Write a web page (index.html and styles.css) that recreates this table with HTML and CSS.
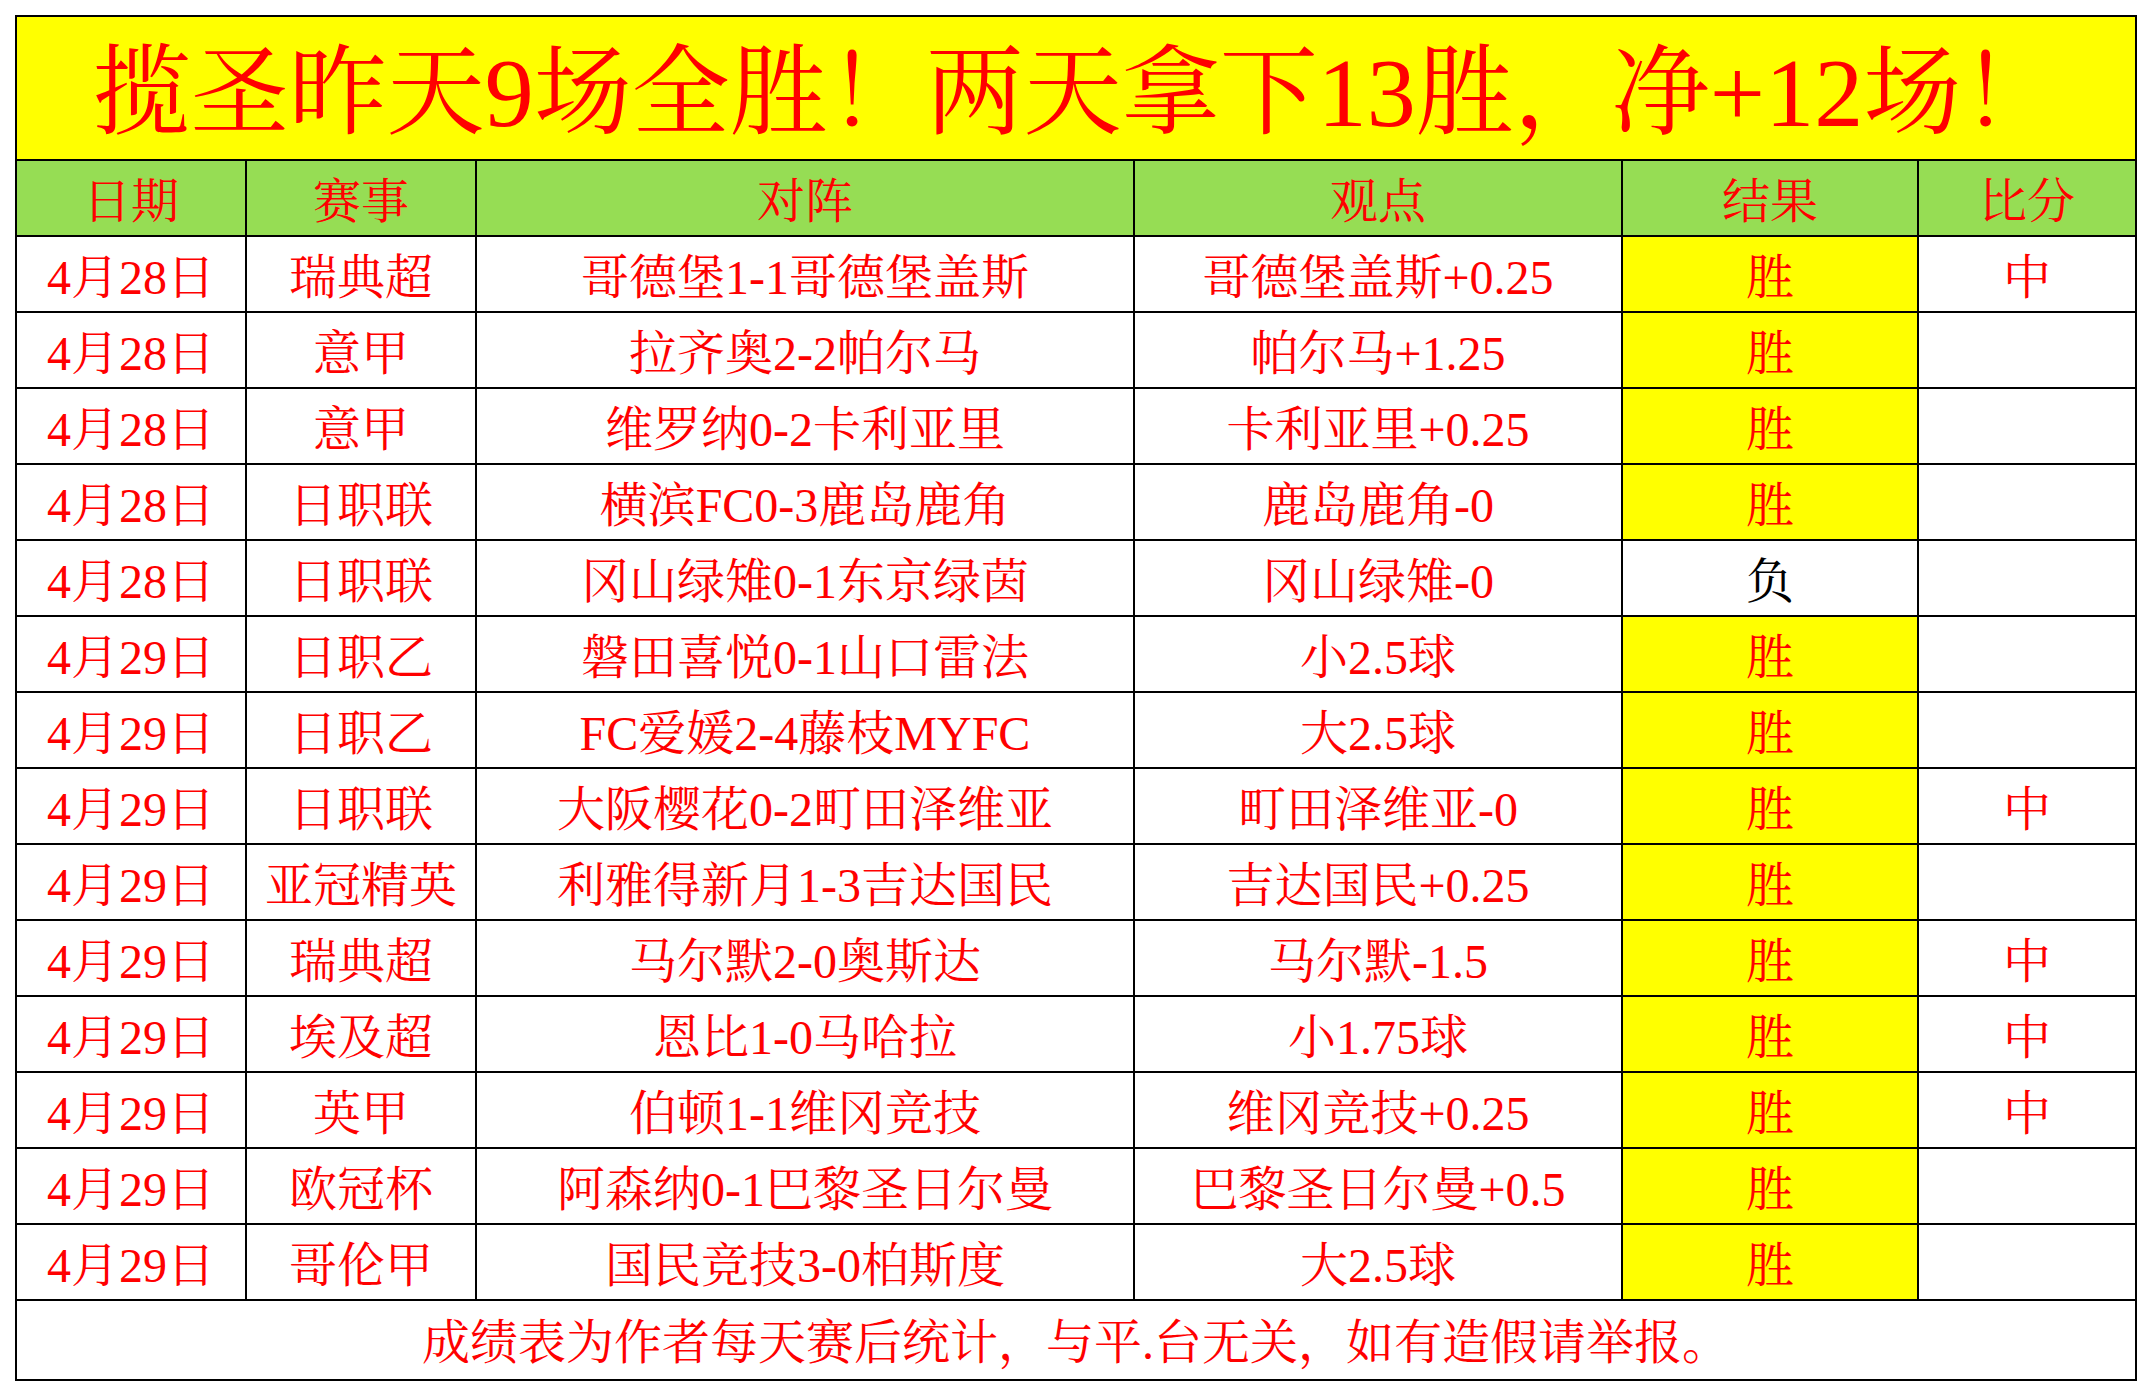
FILE: index.html
```html
<!DOCTYPE html>
<html lang="zh-CN">
<head>
<meta charset="utf-8">
<title>成绩表</title>
<link rel="stylesheet" href="styles.css">
</head>
<body>
<div class="sheet">
  <div class="title">揽圣昨天9场全胜！两天拿下13胜，净+12场！</div>

  <div class="c head">日期</div>
  <div class="c head">赛事</div>
  <div class="c head">对阵</div>
  <div class="c head">观点</div>
  <div class="c head">结果</div>
  <div class="c head">比分</div>

  <div class="c">4月28日</div><div class="c">瑞典超</div><div class="c">哥德堡1-1哥德堡盖斯</div><div class="c">哥德堡盖斯+0.25</div><div class="c win">胜</div><div class="c">中</div>
  <div class="c">4月28日</div><div class="c">意甲</div><div class="c">拉齐奥2-2帕尔马</div><div class="c">帕尔马+1.25</div><div class="c win">胜</div><div class="c"></div>
  <div class="c">4月28日</div><div class="c">意甲</div><div class="c">维罗纳0-2卡利亚里</div><div class="c">卡利亚里+0.25</div><div class="c win">胜</div><div class="c"></div>
  <div class="c">4月28日</div><div class="c">日职联</div><div class="c">横滨FC0-3鹿岛鹿角</div><div class="c">鹿岛鹿角-0</div><div class="c win">胜</div><div class="c"></div>
  <div class="c">4月28日</div><div class="c">日职联</div><div class="c">冈山绿雉0-1东京绿茵</div><div class="c">冈山绿雉-0</div><div class="c lose">负</div><div class="c"></div>
  <div class="c">4月29日</div><div class="c">日职乙</div><div class="c">磐田喜悦0-1山口雷法</div><div class="c">小2.5球</div><div class="c win">胜</div><div class="c"></div>
  <div class="c">4月29日</div><div class="c">日职乙</div><div class="c">FC爱媛2-4藤枝MYFC</div><div class="c">大2.5球</div><div class="c win">胜</div><div class="c"></div>
  <div class="c">4月29日</div><div class="c">日职联</div><div class="c">大阪樱花0-2町田泽维亚</div><div class="c">町田泽维亚-0</div><div class="c win">胜</div><div class="c">中</div>
  <div class="c">4月29日</div><div class="c">亚冠精英</div><div class="c">利雅得新月1-3吉达国民</div><div class="c">吉达国民+0.25</div><div class="c win">胜</div><div class="c"></div>
  <div class="c">4月29日</div><div class="c">瑞典超</div><div class="c">马尔默2-0奥斯达</div><div class="c">马尔默-1.5</div><div class="c win">胜</div><div class="c">中</div>
  <div class="c">4月29日</div><div class="c">埃及超</div><div class="c">恩比1-0马哈拉</div><div class="c">小1.75球</div><div class="c win">胜</div><div class="c">中</div>
  <div class="c">4月29日</div><div class="c">英甲</div><div class="c">伯顿1-1维冈竞技</div><div class="c">维冈竞技+0.25</div><div class="c win">胜</div><div class="c">中</div>
  <div class="c">4月29日</div><div class="c">欧冠杯</div><div class="c">阿森纳0-1巴黎圣日尔曼</div><div class="c">巴黎圣日尔曼+0.5</div><div class="c win">胜</div><div class="c"></div>
  <div class="c">4月29日</div><div class="c">哥伦甲</div><div class="c">国民竞技3-0柏斯度</div><div class="c">大2.5球</div><div class="c win">胜</div><div class="c"></div>

  <div class="foot">成绩表为作者每天赛后统计，与平.台无关，如有造假请举报。</div>
</div>
</body>
</html>
```

FILE: styles.css
```css
html, body {
  margin: 0;
  padding: 0;
  background: #ffffff;
}

body {
  padding: 15px 0 0 15px;
}

.sheet {
  display: grid;
  grid-template-columns: 230px 230px 658px 488px 296px 218px;
  grid-template-rows: 144px 76px repeat(14, 76px) 80px;
  width: 2122px;
  box-sizing: border-box;
  border-left: 2px solid #000;
  border-top: 2px solid #000;
  font-family: "Liberation Serif", "Noto Serif CJK SC", "Noto Sans CJK SC", serif;
  color: #ff0000;
}

.title,
.foot,
.c {
  box-sizing: border-box;
  border-right: 2px solid #000;
  border-bottom: 2px solid #000;
  display: flex;
  align-items: center;
  justify-content: center;
  white-space: nowrap;
  line-height: 1;
}

.title {
  grid-column: 1 / -1;
  background: #ffff00;
  font-size: 98px;
  padding-top: 10px;
}

.c {
  font-size: 48px;
  padding-top: 8px;
}

.head {
  background: #96dd54;
}

.win {
  background: #ffff00;
}

.lose {
  color: #000000;
}

.foot {
  grid-column: 1 / -1;
  font-size: 48px;
  padding-top: 6px;
}
```
